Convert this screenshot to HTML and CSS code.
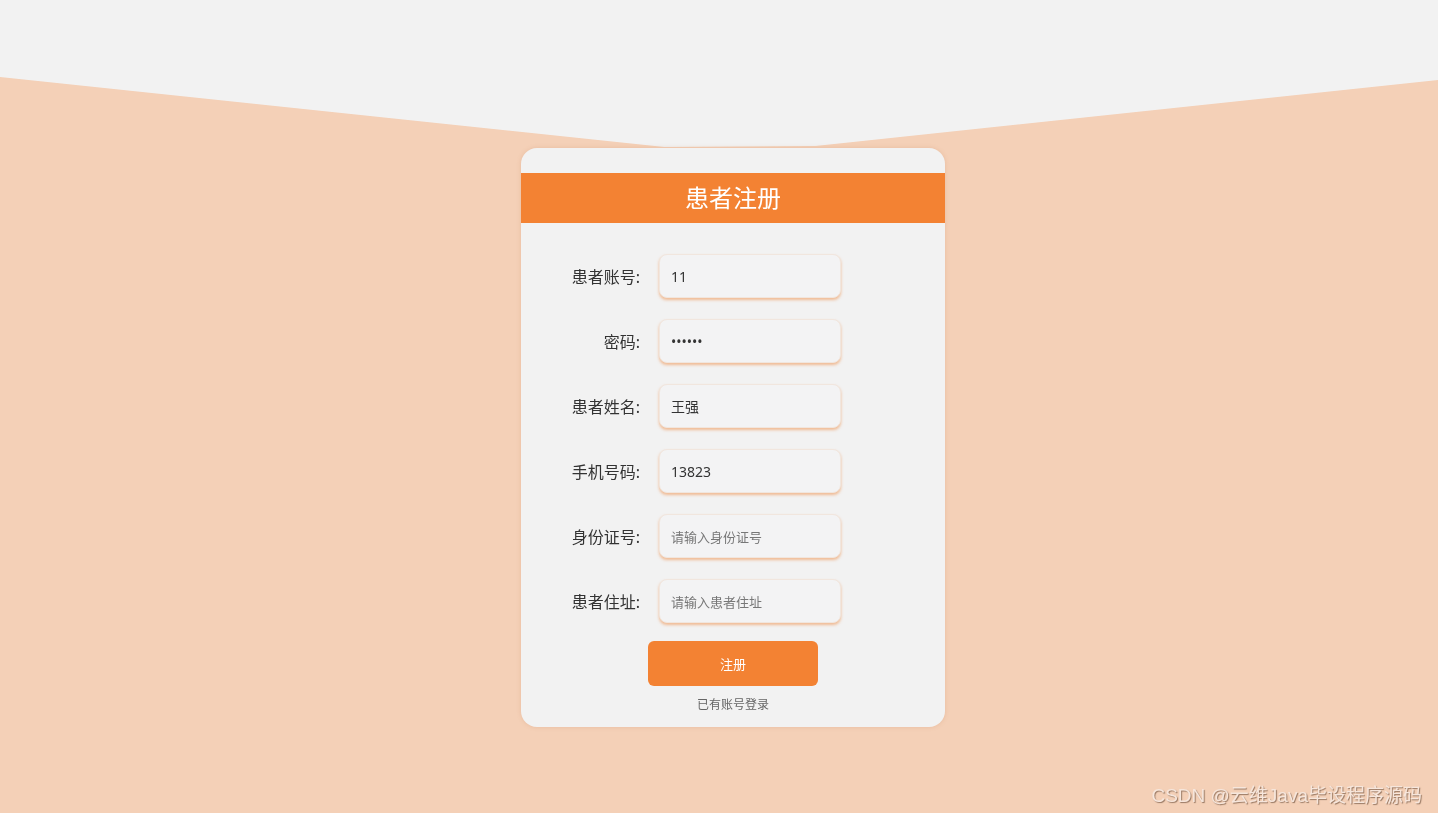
FILE: index.html
```html
<!DOCTYPE html>
<html lang="zh-CN">
<head>
    <meta charset="UTF-8">
    <meta name="viewport" content="width=device-width, initial-scale=1.0">
    <title>患者注册</title>

    <link rel="stylesheet" href="styles.css">
</head>
<body>
    <div class="page">
        <div class="card">
            <h2 class="card-title">患者注册</h2>
            <form id="registerForm" class="form">
                <div class="row">
                    <label for="account">患者账号:</label>
                    <input type="text" id="account" name="account" value="11" placeholder="请输入患者账号">
                </div>
                <div class="row">
                    <label for="password">密码:</label>
                    <input type="password" id="password" name="password" value="123456" placeholder="请输入密码">
                </div>
                <div class="row">
                    <label for="name">患者姓名:</label>
                    <input type="text" id="name" name="name" value="王强" placeholder="请输入患者姓名">
                </div>
                <div class="row">
                    <label for="phone">手机号码:</label>
                    <input type="text" id="phone" name="phone" value="13823" placeholder="请输入手机号码">
                </div>
                <div class="row">
                    <label for="idcard">身份证号:</label>
                    <input type="text" id="idcard" name="idcard" placeholder="请输入身份证号">
                </div>
                <div class="row">
                    <label for="address">患者住址:</label>
                    <input type="text" id="address" name="address" placeholder="请输入患者住址">
                </div>

                <button type="submit" class="submit">注册</button>
                <a href="#" class="login-link">已有账号登录</a>
            </form>
        </div>
    </div>

    <div class="watermark">CSDN @云维Java毕设程序源码</div>
</body>
</html>
```

FILE: styles.css
```css
/* General styling */
body, html {
    margin: 0;
    padding: 0;
    width: 100%;
    height: 100%;
    font-family: "Noto Sans", "Noto Sans CJK SC", sans-serif;
}

body {
    background-color: #f4d0b7;
    overflow: hidden;
}

/* Grey wedge at the top of the page */
body::before {
    content: "";
    position: fixed;
    top: 0;
    left: 0;
    width: 100%;
    height: 160px;
    background-color: #f2f2f2;
    clip-path: polygon(0 0, 100% 0, 100% 80px, 56.7% 146px, 46.2% 147px, 0 77px);
}

.page {
    position: relative;
    display: flex;
    justify-content: center;
    padding-top: 148px;
    padding-left: 28px;
}

/* Card styling */
.card {
    width: 424px;
    height: 579px;
    box-sizing: border-box;
    padding-top: 25px;
    background-color: #f2f2f2;
    border-radius: 16px;
    box-shadow: 0 0 4px rgba(200, 130, 90, 0.25);
}

.card-title {
    margin: 0;
    height: 50px;
    line-height: 50px;
    background-color: #f38233;
    color: #fff;
    text-align: center;
    font-size: 24px;
    font-weight: normal;
}

/* Form styling */
.form {
    display: flex;
    flex-direction: column;
    align-items: center;
    padding-top: 31px;
}

.row {
    display: flex;
    align-items: center;
    width: 424px;
    margin-bottom: 21px;
}

.row label {
    width: 119px;
    text-align: right;
    margin-right: 19px;
    font-size: 16px;
    color: #333;
}

.row input {
    width: 182px;
    height: 44px;
    box-sizing: border-box;
    padding: 0 11px;
    border: 1px solid #f1e6de;
    border-radius: 8px;
    background-color: #f3f3f4;
    box-shadow: 0 2px 3px rgba(238, 140, 70, 0.55);
    font-family: "Noto Sans", "Noto Sans CJK SC", sans-serif;
    font-size: 14px;
    color: #333;
    outline: none;
}

.row input::placeholder {
    font-size: 13px;
    color: #777;
}

.submit {
    width: 170px;
    height: 45px;
    margin-top: -3px;
    border: none;
    border-radius: 6px;
    background-color: #f38233;
    color: #fff;
    font-family: "Noto Sans", "Noto Sans CJK SC", sans-serif;
    font-size: 13px;
    cursor: pointer;
}

.login-link {
    margin-top: 9px;
    font-size: 12px;
    color: #666;
    text-decoration: none;
}

/* Watermark */
.watermark {
    position: fixed;
    right: 16px;
    bottom: 6px;
    font-family: "Liberation Sans", "Noto Sans CJK SC", sans-serif;
    font-size: 19px;
    color: #f6e6dc;
    text-shadow: 1px 1px 1px rgba(110, 80, 60, 0.7);
}
```
